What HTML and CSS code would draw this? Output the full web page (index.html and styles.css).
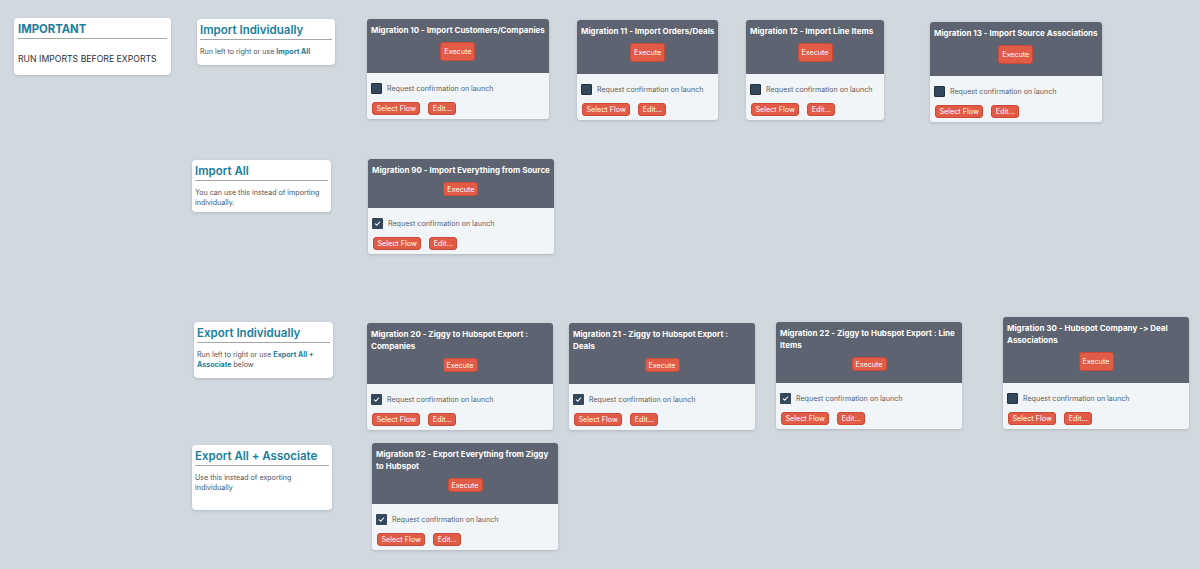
FILE: index.html
```html
<!DOCTYPE html>
<html lang="en">
<head>
<meta charset="utf-8">
<title>Migration Flows</title>
<link rel="stylesheet" href="styles.css">
</head>
<body>
<div class="canvas">

  <div class="note n-important">
    <div class="note-title big">IMPORTANT</div>
    <div class="note-text caps">RUN IMPORTS BEFORE EXPORTS</div>
  </div>

  <div class="note n-impind">
    <div class="note-title">Import Individually</div>
    <div class="note-text">Run left to right or use <b>Import All</b></div>
  </div>

  <div class="note n-impall">
    <div class="note-title">Import All</div>
    <div class="note-text">You can use this instead of importing individually.</div>
  </div>

  <div class="note n-expind">
    <div class="note-title">Export Individually</div>
    <div class="note-text">Run left to right or use <b>Export All + Associate</b> below</div>
  </div>

  <div class="note n-expall">
    <div class="note-title">Export All + Associate</div>
    <div class="note-text">Use this instead of exporting individually</div>
  </div>

  <div class="flow n-m10">
    <div class="flow-head">
      <div class="flow-title">Migration 10 - Import Customers/Companies</div>
      <button class="btn exec tall">Execute</button>
    </div>
    <div class="flow-body">
      <label class="confirm"><span class="box"></span>Request confirmation on launch</label>
      <div class="actions"><button class="btn">Select Flow</button><button class="btn">Edit...</button></div>
    </div>
  </div>

  <div class="flow n-m11">
    <div class="flow-head">
      <div class="flow-title">Migration 11 - Import Orders/Deals</div>
      <button class="btn exec tall">Execute</button>
    </div>
    <div class="flow-body">
      <label class="confirm"><span class="box"></span>Request confirmation on launch</label>
      <div class="actions"><button class="btn">Select Flow</button><button class="btn">Edit...</button></div>
    </div>
  </div>

  <div class="flow n-m12">
    <div class="flow-head">
      <div class="flow-title">Migration 12 - Import Line Items</div>
      <button class="btn exec tall">Execute</button>
    </div>
    <div class="flow-body">
      <label class="confirm"><span class="box"></span>Request confirmation on launch</label>
      <div class="actions"><button class="btn">Select Flow</button><button class="btn">Edit...</button></div>
    </div>
  </div>

  <div class="flow n-m13">
    <div class="flow-head">
      <div class="flow-title">Migration 13 - Import Source Associations</div>
      <button class="btn exec tall">Execute</button>
    </div>
    <div class="flow-body">
      <label class="confirm"><span class="box"></span>Request confirmation on launch</label>
      <div class="actions"><button class="btn">Select Flow</button><button class="btn">Edit...</button></div>
    </div>
  </div>

  <div class="flow n-m90">
    <div class="flow-head">
      <div class="flow-title">Migration 90 - Import Everything from Source</div>
      <button class="btn exec">Execute</button>
    </div>
    <div class="flow-body">
      <label class="confirm"><span class="box checked"><svg viewBox="0 0 11 11" width="11" height="11"><polyline points="3.3,5.8 4.8,7.2 7.7,4" fill="none" stroke="#fff" stroke-width="1.1" stroke-linecap="round" stroke-linejoin="round"/></svg></span>Request confirmation on launch</label>
      <div class="actions"><button class="btn">Select Flow</button><button class="btn">Edit...</button></div>
    </div>
  </div>

  <div class="flow n-m20">
    <div class="flow-head">
      <div class="flow-title">Migration 20 - Ziggy to Hubspot Export : Companies</div>
      <button class="btn exec">Execute</button>
    </div>
    <div class="flow-body">
      <label class="confirm"><span class="box checked"><svg viewBox="0 0 11 11" width="11" height="11"><polyline points="3.3,5.8 4.8,7.2 7.7,4" fill="none" stroke="#fff" stroke-width="1.1" stroke-linecap="round" stroke-linejoin="round"/></svg></span>Request confirmation on launch</label>
      <div class="actions"><button class="btn">Select Flow</button><button class="btn">Edit...</button></div>
    </div>
  </div>

  <div class="flow n-m21">
    <div class="flow-head">
      <div class="flow-title">Migration 21 - Ziggy to Hubspot Export : Deals</div>
      <button class="btn exec">Execute</button>
    </div>
    <div class="flow-body">
      <label class="confirm"><span class="box checked"><svg viewBox="0 0 11 11" width="11" height="11"><polyline points="3.3,5.8 4.8,7.2 7.7,4" fill="none" stroke="#fff" stroke-width="1.1" stroke-linecap="round" stroke-linejoin="round"/></svg></span>Request confirmation on launch</label>
      <div class="actions"><button class="btn">Select Flow</button><button class="btn">Edit...</button></div>
    </div>
  </div>

  <div class="flow n-m22">
    <div class="flow-head">
      <div class="flow-title">Migration 22 - Ziggy to Hubspot Export : Line Items</div>
      <button class="btn exec">Execute</button>
    </div>
    <div class="flow-body">
      <label class="confirm"><span class="box checked"><svg viewBox="0 0 11 11" width="11" height="11"><polyline points="3.3,5.8 4.8,7.2 7.7,4" fill="none" stroke="#fff" stroke-width="1.1" stroke-linecap="round" stroke-linejoin="round"/></svg></span>Request confirmation on launch</label>
      <div class="actions"><button class="btn">Select Flow</button><button class="btn">Edit...</button></div>
    </div>
  </div>

  <div class="flow n-m30">
    <div class="flow-head">
      <div class="flow-title">Migration 30 - Hubspot Company -&gt; Deal Associations</div>
      <button class="btn exec tall">Execute</button>
    </div>
    <div class="flow-body">
      <label class="confirm"><span class="box"></span>Request confirmation on launch</label>
      <div class="actions"><button class="btn">Select Flow</button><button class="btn">Edit...</button></div>
    </div>
  </div>

  <div class="flow n-m92">
    <div class="flow-head">
      <div class="flow-title">Migration 92 - Export Everything from Ziggy to Hubspot</div>
      <button class="btn exec">Execute</button>
    </div>
    <div class="flow-body">
      <label class="confirm"><span class="box checked"><svg viewBox="0 0 11 11" width="11" height="11"><polyline points="3.3,5.8 4.8,7.2 7.7,4" fill="none" stroke="#fff" stroke-width="1.1" stroke-linecap="round" stroke-linejoin="round"/></svg></span>Request confirmation on launch</label>
      <div class="actions"><button class="btn">Select Flow</button><button class="btn">Edit...</button></div>
    </div>
  </div>

</div>
</body>
</html>
```
FILE: styles.css
```css
* { box-sizing: border-box; }

html, body {
  margin: 0;
  padding: 0;
  width: 1200px;
  height: 569px;
  overflow: hidden;
  background: #d1d8df;
  font-family: Inter, "Noto Sans", "Liberation Sans", sans-serif;
  font-feature-settings: "calt" 0, "liga" 0;
}

.canvas {
  position: relative;
  width: 1200px;
  height: 569px;
}

/* ---------- note cards ---------- */
.note {
  position: absolute;
  background: #ffffff;
  border-radius: 4px;
  box-shadow: 0 1px 3px rgba(40, 50, 60, 0.18);
  padding: 3px 3px 6px;
  display: flex;
  flex-direction: column;
}

.note-title {
  color: #1a7e9e;
  font-size: 11.5px;
  font-weight: 600;
  line-height: 16px;
  padding: 0 0 1px 0;
  border-bottom: 1px solid #a6a6a6;
}

.note-title.big {
  font-size: 11.3px;
  font-weight: 700;
  line-height: 16px;
}

.note-text {
  margin-top: 7px;
  font-size: 7.1px;
  line-height: 10px;
  color: #4d525a;
}

.note-text b {
  color: #1a7e9e;
  font-weight: 700;
  line-height: 9px;
}

.note-text.caps {
  margin-top: 15px;
  font-size: 8.7px;
  color: #2c313a;
}

.n-important { left: 14px; top: 18px; width: 157px; height: 57px; padding-left: 4px; padding-right: 4px; }
.n-impind    { left: 197px; top: 19px; width: 138px; height: 46px; }
.n-impall    { left: 192px; top: 160px; width: 139px; height: 52px; }
.n-expind    { left: 194px; top: 322px; width: 139px; height: 56px; }
.n-expall    { left: 192px; top: 445px; width: 140px; height: 65px; }

/* ---------- flow cards ---------- */
.flow {
  position: absolute;
  min-width: 138px;
  max-width: 186px;
  border-radius: 3px;
  overflow: hidden;
  background: #f2f5f8;
  box-shadow: 0 1px 3px rgba(40, 50, 60, 0.2);
}

.flow-head {
  background: #5d6370;
  padding: 5px 4px 12px;
  display: flex;
  flex-direction: column;
  align-items: center;
}

.flow-title {
  align-self: stretch;
  color: #ffffff;
  font-size: 8px;
  font-weight: 700;
  line-height: 12px;
}

.btn {
  margin: 0;
  font-family: inherit;
  font-size: 7.2px;
  color: #ffffff;
  background: #e15b46;
  border: 1px solid #c94a37;
  border-radius: 3px;
  height: 13px;
  padding: 0 3.5px;
  line-height: 11px;
  cursor: pointer;
}

.exec {
  margin-top: 6px;
  height: 14px;
  width: 35px;
  padding: 0;
}

.exec.tall { height: 19px; }

.flow-body {
  padding: 10px 4px 4px;
  display: flex;
  flex-direction: column;
  gap: 8px;
}

.confirm {
  display: flex;
  align-items: center;
  gap: 5px;
  font-size: 7.1px;
  color: #5a5e66;
  height: 11px;
}

.box {
  width: 11px;
  height: 11px;
  border-radius: 1px;
  background: #34475b;
  border: 1px solid #22303f;
  display: block;
  flex: none;
}

.box.checked { border: none; }
.box svg { display: block; }

.actions {
  display: flex;
  gap: 8px;
  padding-left: 1px;
}

.n-m10 { left: 367px; top: 19px; }
.n-m11 { left: 577px; top: 20px; }
.n-m12 { left: 746px; top: 20px; }
.n-m13 { left: 930px; top: 22px; }
.n-m90 { left: 368px; top: 159px; }
.n-m20 { left: 367px; top: 323px; }
.n-m21 { left: 569px; top: 323px; }
.n-m22 { left: 776px; top: 322px; }
.n-m30 { left: 1003px; top: 317px; }
.n-m92 { left: 372px; top: 443px; }
```
